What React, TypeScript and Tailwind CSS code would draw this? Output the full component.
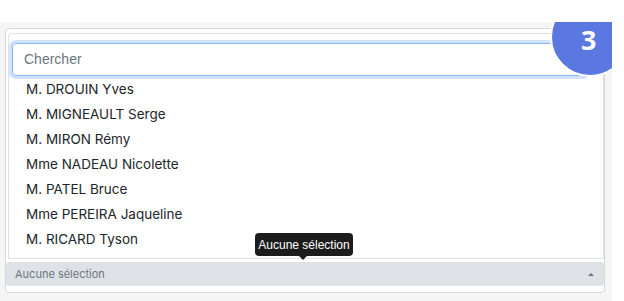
const people = [
    'M. DROUIN Yves',
    'M. MIGNEAULT Serge',
    'M. MIRON Rémy',
    'Mme NADEAU Nicolette',
    'M. PATEL Bruce',
    'Mme PEREIRA Jaqueline',
    'M. RICARD Tyson',
];

export default function App() {
    return (
        <div className="w-[624px] h-[301px] bg-white pt-[22px]">
            <div className="relative w-[612px] h-[279px] bg-[#f5f5f5] overflow-hidden pt-[6px] pl-[5px]">
                <div className="w-[600px] h-[265px] bg-white border border-[#d6d8db] rounded-[4px] pt-[4px] pl-[2px]">
                    <div className="w-[596px] h-[226px] border border-[#dee2e6] rounded-t-[3px] bg-white pt-[9px] pl-[3px]">
                        <div className="w-[575px] h-[33px] border border-[#86b7fe] rounded-[4px] shadow-[0_0_0_3px_rgba(13,110,253,0.2)] flex items-center px-[11px] font-['Liberation_Sans',sans-serif] text-[14px] text-[#6c757d]">
                            Chercher
                        </div>
                        <ul className="mt-[1px] font-['Inter',sans-serif] text-[13.5px] text-[#212529]">
                            {people.map(p => (
                                <li key={p} className="h-[25px] flex items-center pl-[14px]">{p}</li>
                            ))}
                        </ul>
                    </div>
                    <div className="mt-[3px] ml-[-2px] w-[598px] h-[24px] bg-[#dee2e6] rounded-[3px] flex items-center justify-between pl-[9px] pr-[10px] font-['Inter',sans-serif] text-[11px] text-[#6c757d]">
                        <span>Aucune sélection</span>
                        <span className="w-0 h-0 border-x-[3px] border-x-transparent border-b-[3px] border-b-[#6c757d]" />
                    </div>
                </div>

                {/* tooltip */}
                <div className="absolute left-[255px] top-[211px] w-[98px] h-[23px] bg-[#1c1c1c] rounded-[4px] flex items-center justify-center font-['Liberation_Sans',sans-serif] text-[12px] text-white">
                    Aucune sélection
                    <span className="absolute left-[44px] bottom-[-4px] w-0 h-0 border-x-[4px] border-x-transparent border-t-[4px] border-t-[#1c1c1c]" />
                </div>

                {/* step badge */}
                <div className="absolute left-[550px] top-[-25px] w-[80px] h-[80px] rounded-full bg-[#5a77e2] border-2 border-white flex items-start pt-[27px] pl-[29px] font-['Open_Sans',sans-serif] font-bold text-[27px] leading-none text-white">
                    3
                </div>
            </div>
        </div>
    );
}
